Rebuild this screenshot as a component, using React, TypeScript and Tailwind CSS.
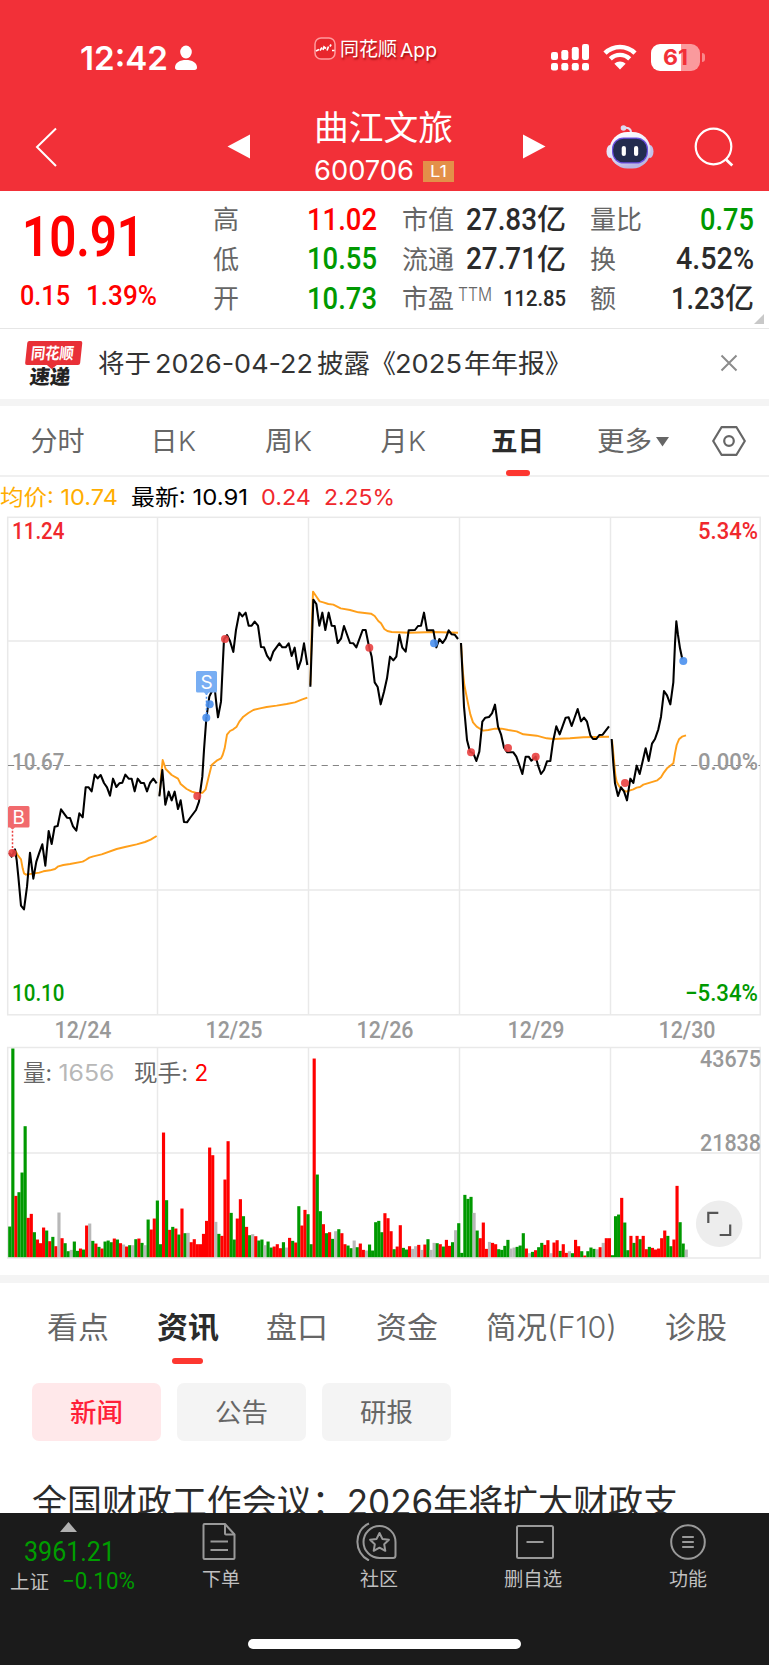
import { useLayoutEffect, useRef } from "react";
import type { ReactNode } from "react";

/** Text condensed or widened horizontally so that it fills a given width. */
function Fit({ w, className = "", children }: { w: number; className?: string; children: ReactNode }) {
  const ref = useRef<HTMLSpanElement>(null);
  useLayoutEffect(() => {
    const el = ref.current;
    if (!el) return;
    el.style.transform = "none";
    const natural = el.getBoundingClientRect().width;
    if (natural > 0) el.style.transform = `scaleX(${w / natural})`;
  }, [w, children]);
  return (
    <span className={`inline-block shrink-0 whitespace-nowrap ${className}`} style={{ width: w }}>
      <span ref={ref} className="inline-block origin-left">
        {children}
      </span>
    </span>
  );
}

const num = "font-[Roboto,sans-serif]";

function StatusBar() {
  return (
    <div className="flex h-[100px] items-start">
      <Fit w={88} className="mt-[38px] ml-[80px] text-[33px] leading-[40px] font-semibold">12:42</Fit>
      <svg className="mt-[45px] ml-[6px]" width="24" height="26" viewBox="0 0 24 26" fill="#fff">
        <ellipse cx="12" cy="7" rx="5.8" ry="6.4" />
        <path d="M1 22.5C1 17.5 6 15 12 15s11 2.500 11 7.500c0 1.500-.8 2.500-2.500 2.500h-17C1.800 25 1 24 1 22.500z" />
      </svg>
      <svg className="mt-[37px] ml-[116px]" width="22" height="23" viewBox="0 0 22 23" fill="none">
        <rect x="1" y="1" width="20" height="21" rx="6" fill="#e8262d" stroke="#ff9a9d" strokeWidth="1.500" />
        <path d="M2 14l3-1.500M6 13.500l2-3M9 13l1-3 2 1.500M13 13.500l1.500-4M16 9.500l1-2M18 13.500h2.500" stroke="#fff" strokeWidth="1.700" />
      </svg>
      <div className="mt-[35px] ml-[4px] flex w-[98px] text-[19px] leading-[30px] [text-shadow:1px_2px_2px_rgba(120,0,0,0.7)]">
        <Fit w={57}>同花顺</Fit>
        <Fit w={37} className="mt-[1px] ml-[3px]">App</Fit>
      </div>
      <svg className="mt-[43px] ml-[112px]" width="40" height="29" viewBox="0 0 40 29" fill="#fff">
        <rect x="1" y="9" width="7" height="8" rx="2.200" />
        <rect x="11.300" y="7" width="7" height="10" rx="2.200" />
        <rect x="21.800" y="4" width="7" height="13" rx="2.200" />
        <rect x="32" y="1" width="7" height="16" rx="2.200" />
        <rect x="1" y="20" width="7" height="7.500" rx="2.200" />
        <rect x="11.300" y="20" width="7" height="7.500" rx="2.200" />
        <rect x="21.800" y="20" width="7" height="7.500" rx="2.200" />
        <rect x="32" y="20" width="7" height="7.500" rx="2.200" />
      </svg>
      <svg className="mt-[44px] ml-[13px]" width="34" height="26" viewBox="0 0 34 26" fill="none" stroke="#fff">
        <path d="M2 9.200C10.500 1 23.500 1 32 9.200" strokeWidth="4.600" />
        <path d="M7.300 14.800c5.500-5.300 13.900-5.300 19.400 0" strokeWidth="4.400" />
        <path d="M17 25.500l-5.600-5.800c3.200-3 8-3 11.200 0z" fill="#fff" stroke="none" />
      </svg>
      <div className="mt-[44px] ml-[14px] flex h-[27px] w-[49px] items-center justify-center rounded-[9px] bg-[linear-gradient(90deg,#fff_62%,#fa9a9d_62%)] text-[22px] font-bold text-[#f23038]">
        <Fit w={25} className="leading-[27px]">61</Fit>
      </div>
      <div className="mt-[53px] ml-[2px] h-[9px] w-[2.5px] rounded-r-full bg-[#f9888c]" />
    </div>
  );
}

function NavBar() {
  return (
    <div className="flex h-[91px] items-start">
      <svg className="mt-[27px] ml-[35px]" width="23" height="40" viewBox="0 0 23 40" fill="none" stroke="#fff" strokeWidth="2">
        <path d="M21 1.500L2 20l19 19" />
      </svg>
      <svg className="mt-[34px] ml-[169px]" width="23" height="25" viewBox="0 0 23 25" fill="#fff">
        <path d="M0.500 12.500L23 0.500v24z" />
      </svg>
      <div className="ml-[64px] flex w-[150px] flex-col">
        <Fit w={139} className="mt-[8px] text-[34px] leading-[40px]">曲江文旅</Fit>
        <div className="mt-[9px] flex items-center">
          <Fit w={100} className="text-[27px] leading-[28px]">600706</Fit>
          <div className="ml-[9px] flex h-[21px] w-[31px] items-center justify-center bg-[#e39049] text-[16px] leading-[21px]">
            <Fit w={17}>L1</Fit>
          </div>
        </div>
      </div>
      <svg className="mt-[34px] ml-[59px]" width="23" height="25" viewBox="0 0 23 25" fill="#fff">
        <path d="M22.500 12.500L0 0.500v24z" />
      </svg>
      <svg className="mt-[24px] ml-[58.5px]" width="50" height="46" viewBox="0 0 50 46">
        <defs>
          <linearGradient id="shell" x1="0" y1="0" x2="0.300" y2="1">
            <stop offset="0" stopColor="#ffffff" />
            <stop offset="0.600" stopColor="#e9e7f8" />
            <stop offset="1" stopColor="#b9b7e2" />
          </linearGradient>
        </defs>
        <path d="M18 4.500c4-2 8 0 8 4" fill="none" stroke="#e2e0f5" strokeWidth="2" />
        <circle cx="18.500" cy="4" r="2.800" fill="#dcdaf2" />
        <ellipse cx="5" cy="27.500" rx="3.500" ry="6.500" fill="#e6e4f8" />
        <ellipse cx="45" cy="27.500" rx="3.500" ry="6.500" fill="#c3c1e8" />
        <rect x="4.500" y="8" width="41" height="36.500" rx="18" fill="url(#shell)" />
        <rect x="7" y="13.500" width="36" height="26" rx="11.500" fill="#6a4fe0" />
        <rect x="8.200" y="14.700" width="33.600" height="23.600" rx="10.500" fill="#232c4f" />
        <rect x="16.700" y="22" width="4.200" height="10" rx="2.100" fill="#fff" />
        <rect x="29" y="22" width="4.200" height="10" rx="2.100" fill="#fff" />
      </svg>
      <svg className="mt-[27px] ml-[39.5px]" width="40" height="40" viewBox="0 0 40 40" fill="none" stroke="#fff" strokeWidth="2.200">
        <circle cx="19.500" cy="19.500" r="17.800" />
        <path d="M32 32.500l6.300 6" strokeWidth="2.800" />
      </svg>
    </div>
  );
}

const RED = "text-[#ff0000]";
const GREEN = "text-[#009900]";
const INK = "text-[#2b2b2b]";

function Quote() {
  const label = "text-[26px] text-[#666]";
  const row = "flex h-[39.5px] items-center justify-between";
  const value = `${num} text-[31px] font-medium`;
  return (
    <section className="flex h-[138px] border-b border-[#e6e6e6] bg-white">
      <div className={`w-[213px] ${RED} ${num} font-medium`}>
        <Fit w={122} className="mt-[12px] ml-[22px] text-[56px] leading-[68px] font-semibold">10.91</Fit>
        <div className="mt-[8px] flex text-[28px] leading-[34px]">
          <Fit w={50} className="ml-[20px]">0.15</Fit>
          <Fit w={71} className="ml-[15.5px]">1.39%</Fit>
        </div>
      </div>
      <div className="w-[164px] pt-[9px]">
        <div className={row}><span className={label}>高</span><Fit w={70} className={`${value} ${RED}`}>11.02</Fit></div>
        <div className={row}><span className={label}>低</span><Fit w={70} className={`${value} ${GREEN}`}>10.55</Fit></div>
        <div className={row}><span className={label}>开</span><Fit w={70} className={`${value} ${GREEN}`}>10.73</Fit></div>
      </div>
      <div className="ml-[25px] w-[164px] pt-[9px]">
        <div className={row}>
          <span className={label}>市值</span>
          <span className={`flex items-center ${INK}`}><Fit w={71} className={value}>27.83</Fit><span className="text-[29px] font-medium">亿</span></span>
        </div>
        <div className={row}>
          <span className={label}>流通</span>
          <span className={`flex items-center ${INK}`}><Fit w={71} className={value}>27.71</Fit><span className="text-[29px] font-medium">亿</span></span>
        </div>
        <div className={row}>
          <span className={`flex ${label}`}>市盈<Fit w={34} className="mt-[2px] ml-[4px] text-[18px] leading-[28px] font-light">TTM</Fit></span>
          <Fit w={63} className={`${num} ${INK} text-[22px] font-medium`}>112.85</Fit>
        </div>
      </div>
      <div className="ml-[24px] w-[164px] pt-[9px]">
        <div className={row}><span className={label}>量比</span><Fit w={54} className={`${value} ${GREEN}`}>0.75</Fit></div>
        <div className={row}><span className={label}>换</span><Fit w={78} className={`${value} ${INK}`}>4.52%</Fit></div>
        <div className={row}>
          <span className={label}>额</span>
          <span className={`flex items-center ${INK}`}><Fit w={54} className={value}>1.23</Fit><span className="text-[29px] font-medium">亿</span></span>
        </div>
      </div>
      <svg className="mt-auto mb-[4px]" width="11" height="10" viewBox="0 0 11 10" fill="#c8c8c8">
        <path d="M10 0v10H0z" />
      </svg>
    </section>
  );
}

function Notice() {
  return (
    <section className="flex h-[70px] items-center bg-white">
      <div className="mt-[1px] ml-[22px] flex w-[60px] -skew-x-6 flex-col items-center">
        <div className="flex h-[24px] w-[55px] items-center justify-center rounded-[2px] bg-[#e83037] text-white">
          <Fit w={45} className="text-[16px] leading-[24px] font-bold">同花顺</Fit>
        </div>
        <svg width="10" height="4" viewBox="0 0 10 4" fill="#e83037"><path d="M0 0h10L5 4z" /></svg>
        <Fit w={43} className="-mt-[2px] text-[20px] leading-[21px] font-black text-[#222]">速递</Fit>
      </div>
      <div className="-mt-[1px] ml-[16px] flex text-[26px] leading-[40px] text-[#333]">
        <Fit w={53}>将于</Fit>
        <Fit w={158} className="ml-[4px]">2026-04-22</Fit>
        <Fit w={53} className="ml-[4px]">披露</Fit>
        <Fit w={26}>《</Fit>
        <Fit w={67} className="-ml-[1px]">2025</Fit>
        <Fit w={108} className="ml-[2px]">年年报》</Fit>
      </div>
      <svg className="-mt-[2px] mr-[31px] ml-auto" width="18" height="18" viewBox="0 0 18 18" stroke="#8c8c8c" strokeWidth="2">
        <path d="M1.500 1.500l15 15M16.500 1.500l-15 15" />
      </svg>
    </section>
  );
}

function ChartTabs() {
  const cell = "flex h-full shrink-0 items-center justify-center pt-[4px]";
  return (
    <nav className="flex h-[71px] items-center border-b-2 border-[#f0f0f0] bg-white text-[27px] text-[#666]">
      <div className={`${cell} w-[115px]`}><Fit w={54}>分时</Fit></div>
      <div className={`${cell} w-[116px]`}><Fit w={27}>日</Fit><Fit w={18} className="font-light">K</Fit></div>
      <div className={`${cell} w-[114px]`}><Fit w={28}>周</Fit><Fit w={19} className="font-light">K</Fit></div>
      <div className={`${cell} w-[116px]`}><Fit w={27}>月</Fit><Fit w={18} className="font-light">K</Fit></div>
      <div className={`relative ${cell} w-[113px] font-bold text-[#2b2b2b]`}>
        <Fit w={53}>五日</Fit>
        <div className="absolute -bottom-[1px] h-[6px] w-[24px] rounded-[3px] bg-[#fd3730]" />
      </div>
      <div className={`${cell} w-[117px]`}>
        <Fit w={55}>更多</Fit>
        <svg className="-mt-[1px] ml-[4px]" width="13" height="10" viewBox="0 0 13 10" fill="#666"><path d="M0 0h13L6.500 9.500z" /></svg>
      </div>
      <div className="flex h-full w-[76px] items-center justify-center">
        <svg width="34" height="30" viewBox="0 0 34 30" fill="none" stroke="#666" strokeWidth="2.200">
          <path d="M9.500 1.200h15L32.800 15l-8.300 13.800h-15L1.200 15z" strokeLinejoin="round" />
          <circle cx="17" cy="15" r="4.800" />
        </svg>
      </div>
    </nav>
  );
}

/* One price path and one average path for every session, in thirds of a pixel. */
const sessions = [
  {
    origin: "translate(0 510) scale(0.33333)",
    avg: "45,1020 53,1035 63,1048 68,1075 72,1090 78,1094 118,1088 130,1084 150,1081 165,1077 175,1069 190,1065 210,1062 248,1055 257,1050 268,1043 280,1039 305,1033 350,1017 375,1011 410,1003 435,996 452,989 470,978",
    price: "28,1028 35,1040 45,1018 50,1050 55,1100 63,1187 72,1198 81,1130 90,1028 100,1106 109,1055 118,1028 127,1003 136,1067 146,963 155,1002 164,950 173,948 183,898 201,923 210,924 219,949 229,962 238,910 248,922 257,832 266,832 275,844 284,794 293,805 302,795 312,819 321,832 330,857 339,806 349,831 358,820 367,818 376,794 386,806 395,806 404,844 413,806 423,819 432,819 441,844 450,819 460,806 470,820",
  },
  {
    origin: "translate(0 510) scale(0.33333)",
    avg: "479,855 483,800 488,750 497,777 506,786 515,795 534,806 542,822 560,837 575,845 590,849 608,848 617,838 625,805 635,765 650,752 663,745 668,735 674,715 681,674 690,663 700,658 710,650 718,635 730,620 745,609 760,600 780,595 800,591 830,587 860,582 885,577 905,569 922,563",
    price: "478,859 487,780 496,884 506,845 515,871 524,845 534,897 542,871 552,936 561,937 570,924 588,900 597,875 600,850 607,800 612,720 619,625 628,560 636,543 645,543 650,590 654,622 663,575 668,470 672,388 681,375 690,393 700,426 708,360 718,308 727,319 737,308 746,347 755,347 764,335 774,347 783,411 792,412 801,437 811,451 820,425 838,400 847,412 857,412 866,400 875,438 884,413 894,477 903,451 912,400 922,465",
  },
  {
    origin: "translate(300 560) scale(0.33333)",
    avg: "31,375 36,180 39,95 48,108 59,124 70,127 85,132 100,134 122,145 150,150 175,157 213,161 224,168 235,183 243,190 253,207 262,213 275,216 330,218 400,216 474,218",
    price: "31,380 40,119 49,132 58,197 67,158 76,210 86,158 95,197 104,198 113,249 123,236 132,198 150,249 160,250 169,262 188,210 197,210 206,255 215,290 224,367 233,381 242,433 252,395 261,355 270,290 280,301 289,290 298,224 307,263 317,275 326,211 345,210 354,198 363,197 372,158 381,211 400,211 409,262 418,237 428,249 437,236 446,211 455,223 464,224 474,237",
  },
  {
    origin: "translate(300 560) scale(0.33333)",
    avg: "483,249 488,330 493,375 503,425 511,463 519,487 530,500 541,507 550,512 565,510 585,506 605,506 625,510 650,514 670,523 710,527 740,535 760,537 810,535 850,532 927,530",
    price: "483,249 487,330 492,440 501,540 510,575 520,580 529,603 538,575 547,485 556,473 567,471 576,460 585,434 594,500 603,523 612,563 622,577 640,577 649,590 658,615 667,642 677,590 686,590 694,602 707,590 714,616 723,642 732,630 741,604 751,603 759,545 769,499 779,523 797,473 806,472 815,498 833,447 843,484 852,473 861,485 871,526 879,537 889,537 898,525 908,524 927,499",
  },
  {
    origin: "translate(520 600) scale(0.33333)",
    avg: "276,420 281,470 286,525 290,545 297,558 306,568 318,575 330,571 340,568 350,563 360,561 370,554 390,548 412,541 423,532 432,517 441,505 450,498 460,490 465,460 470,435 477,418 486,410 498,406",
    price: "275,417 280,490 285,550 294,588 303,562 312,574 321,601 331,536 340,549 350,497 359,522 368,484 377,445 386,483 396,431 405,417 415,388 423,350 432,273 441,286 451,313 460,247 465,130 469,64 474,105 480,145 487,178",
  },
];

const dots: [number, number, "buy" | "sell"][] = [
  [12.3, 853, "buy"],
  [197.3, 796, "buy"],
  [225, 639, "buy"],
  [206.3, 717.7, "sell"],
  [209.7, 704.3, "sell"],
  [369.3, 647.7, "buy"],
  [434, 643.3, "sell"],
  [471, 752.3, "buy"],
  [508, 748, "buy"],
  [535.7, 756.7, "buy"],
  [625, 783, "buy"],
  [683.3, 661, "sell"],
];

/* Volume bars: colour letter and bar top; every list is measured from its own base. */
const volume = [
  {
    base: 1011,
    bars: "g919 g385 r827 g816 g757 g618 r893 r881 g936 r958 r969 r922 g931 r963 g950 r978 n877 r954 g969 g993 n989 g964 g992 r985 g988 r916 n910 g962 r970 g980 r985 g964 g961 g966 r955 g958 r969 n973 r979 g975 n975 g957 r955 g968 n975 g898 r928 r895 g841",
  },
  {
    base: 1011,
    bars: "g972 r637 g840 r929 g920 r925 g943 r865 g939 n938 r966 r957 r972 r972 r941 r902 r682 r705 n905 g941 r947 r778 r663 g878 g958 r895 r837 g888 r920 g945 n942 r948 g961 g958 n975 g964 g982 r979 r972 r984 g966 n982 r953 g962 r967 g858 r916 r869 g882",
  },
  {
    base: 771,
    bars: "g732 r175 g523 g633 r672 g699 r696 g716 n693 g687 r699 r732 g736 g744 n721 g741 r730 r749 n751 g733 g751 g666 g662 g696 r639 r654 r693 g747 r739 r675 g743 g748 r738 n746 n738 r734 n749 r733 g717 n749 n728 g729 r732 g739 r719 r737 g726 n690 g669",
  },
  {
    base: 771,
    bars: "g758 g584 g596 g590 n638 g691 r714 r667 r746 n725 r728 r732 g747 g749 g737 g719 n745 n742 g740 g736 g699 r745 n759 g755 r750 g741 g728 r734 r720 n759 r727 r720 g752 r732 r758 n753 g759 r719 r738 g753 r766 g753 g742 g746 n747 r741 n728 r714 r714",
  },
  {
    base: 771,
    bars: "g765 g648 g643 r593 g667 g750 r707 g728 r707 g717 r707 r747 g740 r743 r748 r745 r714 r691 g707 g738 r718 r557 g666 g730 n748",
  },
].flatMap(({ base, bars }) => bars.split(" ").map((b) => ({ tone: b[0], height: (base - Number(b.slice(1))) / 3 })));

const tones: Record<string, string> = { g: "#009900", r: "#ff0000", n: "#b8b8b8" };
const dayLines = [157.5, 308.5, 459.5, 610.5];
const days = ["12/24", "12/25", "12/26", "12/29", "12/30"];

function Chart() {
  return (
    <svg className="block shrink-0 font-[Roboto,sans-serif]" width="769" height="765" viewBox="0 510 769 765">
      <g stroke="#e9e9e9" strokeWidth="1.500" fill="none">
        <rect x="7.700" y="517.300" width="752.500" height="497.500" />
        <rect x="7.700" y="1047.500" width="752.500" height="210.500" />
        <path d="M8 641h752M8 890h752M8 1153h752" />
        {dayLines.map((x) => (
          <path key={x} d={`M${x} 518v497M${x} 1048v210`} />
        ))}
      </g>
      <path d="M8 765.500h752" stroke="#858585" strokeWidth="1.200" strokeDasharray="6.200 5" />
      {volume.map((b, i) => (
        <rect key={i} x={8.2 + i * 3.075} y={1257.2 - b.height} width="3.150" height={b.height} fill={tones[b.tone]} />
      ))}
      {sessions.map((s, i) => (
        <g key={i} transform={s.origin} fill="none" strokeLinejoin="round">
          <polyline points={s.avg} stroke="#ff9f1a" strokeWidth="5.800" />
          <polyline points={s.price} stroke="#000" strokeWidth="6.200" />
        </g>
      ))}
      {dots.map(([x, y, kind]) => (
        <circle key={`${x}`} cx={x} cy={y} r="4" fill={kind === "buy" ? "#e94141" : "#4a90ee"} fillOpacity="0.900" />
      ))}
      <path d="M12.500 827v25" stroke="#e94141" strokeWidth="1.500" strokeDasharray="2 1.800" />
      <path d="M206.500 693v24" stroke="#4a90ee" strokeWidth="1.500" strokeDasharray="2 1.800" />
      <path d="M9.500 806h18.500a1.500 1.500 0 0 1 1.500 1.500v18.500a1.500 1.500 0 0 1-1.500 1.500H15l-2.500 2-2.500-2H8v-20z" fill="#f16a6d" />
      <path d="M197.500 671h18a1.500 1.500 0 0 1 1.500 1.500v18.500a1.500 1.500 0 0 1-1.500 1.500h-6.500l-2.500 2.500-2.500-2.500h-6.500a1.500 1.500 0 0 1-1.500-1.500v-18.500a1.500 1.500 0 0 1 1.500-1.500z" fill="#78aef3" />
      <g fill="#fff" fontSize="19" textAnchor="middle" fontFamily="Inter, sans-serif">
        <text x="18.700" y="824">B</text>
        <text x="206.700" y="689">S</text>
      </g>
      <g fontSize="23.500" fontWeight="500">
        <text x="12" y="539" fill="#f0282d" textLength="52.500" lengthAdjust="spacingAndGlyphs">11.24</text>
        <text x="698" y="539" fill="#f0282d" textLength="60" lengthAdjust="spacingAndGlyphs">5.34%</text>
        <text x="12" y="770" fill="#999" textLength="52.500" lengthAdjust="spacingAndGlyphs">10.67</text>
        <text x="698" y="770" fill="#999" textLength="60" lengthAdjust="spacingAndGlyphs">0.00%</text>
        <text x="12" y="1001" fill="#009900" textLength="52.500" lengthAdjust="spacingAndGlyphs">10.10</text>
        <text x="685" y="1001" fill="#009900" textLength="73" lengthAdjust="spacingAndGlyphs">−5.34%</text>
      </g>
      <g fontSize="23.500" fontWeight="500" fill="#999">
        {days.map((d, i) => (
          <text key={d} x={54.5 + i * 151} y="1038.200" textLength="57" lengthAdjust="spacingAndGlyphs">{d}</text>
        ))}
        <text x="700" y="1067" textLength="61" lengthAdjust="spacingAndGlyphs">43675</text>
        <text x="700" y="1151.300" textLength="61" lengthAdjust="spacingAndGlyphs">21838</text>
      </g>
      <g fontSize="22.500" fontFamily="Inter, 'Noto Sans CJK SC', sans-serif">
        <text x="23" y="1080.500" fill="#666" textLength="29" lengthAdjust="spacingAndGlyphs">量:</text>
        <text x="58.500" y="1080.500" fill="#b8b8b8" textLength="56" lengthAdjust="spacingAndGlyphs">1656</text>
        <text x="134" y="1080.500" fill="#666" textLength="54" lengthAdjust="spacingAndGlyphs">现手:</text>
        <text x="194.500" y="1080.500" fill="#ff0000">2</text>
      </g>
      <circle cx="719.200" cy="1223.700" r="23.300" fill="#ededed" />
      <path d="M708.300 1223v-10.200h10M730.200 1224.500v10.500h-10.500" fill="none" stroke="#555" strokeWidth="2.200" />
    </svg>
  );
}

function InfoTabs() {
  return (
    <nav className="flex h-[82px] items-start pt-[21.5px] pl-[47px] text-[30px] leading-[44px] text-[#666]">
      <Fit w={62}>看点</Fit>
      <div className="relative ml-[48px] flex h-full w-[62px] justify-center font-bold text-[#2b2b2b]">
        <Fit w={62}>资讯</Fit>
        <div className="absolute top-[53px] left-[15px] h-[6px] w-[31px] rounded-[3px] bg-[#fd3730]" />
      </div>
      <Fit w={62} className="ml-[47px]">盘口</Fit>
      <Fit w={62} className="ml-[48px]">资金</Fit>
      <div className="ml-[48px] flex w-[132px]">
        <Fit w={61}>简况</Fit>
        <Fit w={70} className="font-light">(F10)</Fit>
      </div>
      <Fit w={62} className="ml-[47px]">诊股</Fit>
    </nav>
  );
}

function BottomBar() {
  const item = "flex flex-col items-center";
  const label = "text-[19px] leading-[24px] text-[#c0c0c0]";
  return (
    <footer className="flex h-[152px] shrink-0 flex-col bg-[#1b1b1b]">
      <div className="flex h-[131px] items-start">
        <div className="w-[145px] pt-[9px]">
          <svg className="ml-[60px] block" width="17" height="10" viewBox="0 0 17 10" fill="#b0b0b0"><path d="M8.500 0L17 10H0z" /></svg>
          <Fit w={91} className={`mt-[3px] ml-[24px] ${num} text-[28px] leading-[34px] text-[#009d00]`}>3961.21</Fit>
          <div className="-mt-[1px] flex">
            <Fit w={39} className="ml-[10px] text-[19px] leading-[29px] text-[#c0c0c0]">上证</Fit>
            <Fit w={73} className={`ml-[13px] ${num} text-[23px] leading-[27px] text-[#009d00]`}>−0.10%</Fit>
          </div>
        </div>
        <div className={`${item} w-[153px] pt-[9px]`}>
          <svg className="mr-[3px] mb-[7px]" width="36" height="39" viewBox="0 0 36 39" fill="none" stroke="#999" strokeWidth="2" strokeLinejoin="round">
            <path d="M3.500 2H24l9.500 10.500V36a1 1 0 0 1-1 1h-29a1 1 0 0 1-1-1V3a1 1 0 0 1 1-1z" />
            <path d="M24 2v9.500a1 1 0 0 0 1 1h8.500M9.500 19.500h17.500M9.500 28h17.500" />
          </svg>
          <Fit w={38} className={label}>下单</Fit>
        </div>
        <div className={`${item} w-[164px] pt-[9px]`}>
          <svg className="mr-[4px] mb-[7px]" width="42" height="39" viewBox="0 0 42 39" fill="none" stroke="#999" strokeWidth="2" strokeLinejoin="round">
            <path d="M23.500 4C32 4 39.500 11 39.500 20v13.500c0 1.500-1 2.500-2.500 2.500H23.500a16 16 0 0 1 0-32z" />
            <path d="M13 1.500C-2.500 8-2.500 31 13 38.500" />
            <path d="M23.500 11l2.900 5.900 6.500.9-4.700 4.500 1.100 6.500-5.800-3.100-5.800 3.100 1.100-6.500-4.700-4.500 6.500-.9z" />
          </svg>
          <Fit w={38} className={label}>社区</Fit>
        </div>
        <div className={`${item} w-[147px] pt-[9px]`}>
          <svg className="mb-[7px] ml-[4px]" width="40" height="39" viewBox="0 0 40 39" fill="none" stroke="#999" strokeWidth="2">
            <rect x="2" y="4" width="36" height="32" rx="1.500" />
            <path d="M11.500 20h17" />
          </svg>
          <Fit w={58} className={label}>删自选</Fit>
        </div>
        <div className={`${item} w-[163px] pt-[9px]`}>
          <svg className="mb-[7px]" width="38" height="39" viewBox="0 0 38 39" fill="none" stroke="#999" strokeWidth="2">
            <circle cx="19" cy="20" r="16.800" />
            <path d="M13.200 15h11.600M13.200 20h11.600M13.200 25h11.600" />
          </svg>
          <Fit w={38} className={label}>功能</Fit>
        </div>
      </div>
      <div className="-mt-[5px] ml-[248px] h-[10px] w-[273px] rounded-full bg-white" />
    </footer>
  );
}

export default function App() {
  const chip = "flex h-[58px] w-[129px] items-center justify-center rounded-[7px] text-[26px]";
  return (
    <div className="flex h-[1665px] w-[769px] flex-col overflow-hidden bg-white font-[Inter,'Noto_Sans_CJK_SC',sans-serif]">
      <header className="bg-[#f23038] text-white">
        <StatusBar />
        <NavBar />
      </header>
      <Quote />
      <Notice />
      <div className="h-[7px] shrink-0 bg-[#f4f4f4]" />
      <ChartTabs />
      <div className="flex h-[33px] items-start pt-[3.5px] text-[22px] leading-[33px] text-black">
        <Fit w={118} className="text-[#ffad00]">均价: 10.74</Fit>
        <Fit w={117} className="ml-[13px]">最新: 10.91</Fit>
        <Fit w={50} className="ml-[13px] text-[#f0282d]">0.24</Fit>
        <Fit w={71} className="ml-[13px] text-[#f0282d]">2.25%</Fit>
      </div>
      <Chart />
      <div className="h-[8px] shrink-0 bg-[#f4f4f4]" />
      <InfoTabs />
      <div className="mt-[18px] flex gap-[16px] pl-[31.5px] text-[#666]">
        <div className={`${chip} bg-[#ffe8ea] font-medium text-[#ff1f38]`}><Fit w={53}>新闻</Fit></div>
        <div className={`${chip} bg-[#f4f4f4]`}><Fit w={53}>公告</Fit></div>
        <div className={`${chip} bg-[#f4f4f4]`}><Fit w={53}>研报</Fit></div>
      </div>
      <div className="h-[72px] shrink-0 overflow-hidden pt-[35.5px] pl-[32px]">
        <Fit w={646} className="text-[35px] leading-[50px] text-[#2b2b2b]">全国财政工作会议：2026年将扩大财政支</Fit>
      </div>
      <BottomBar />
    </div>
  );
}
